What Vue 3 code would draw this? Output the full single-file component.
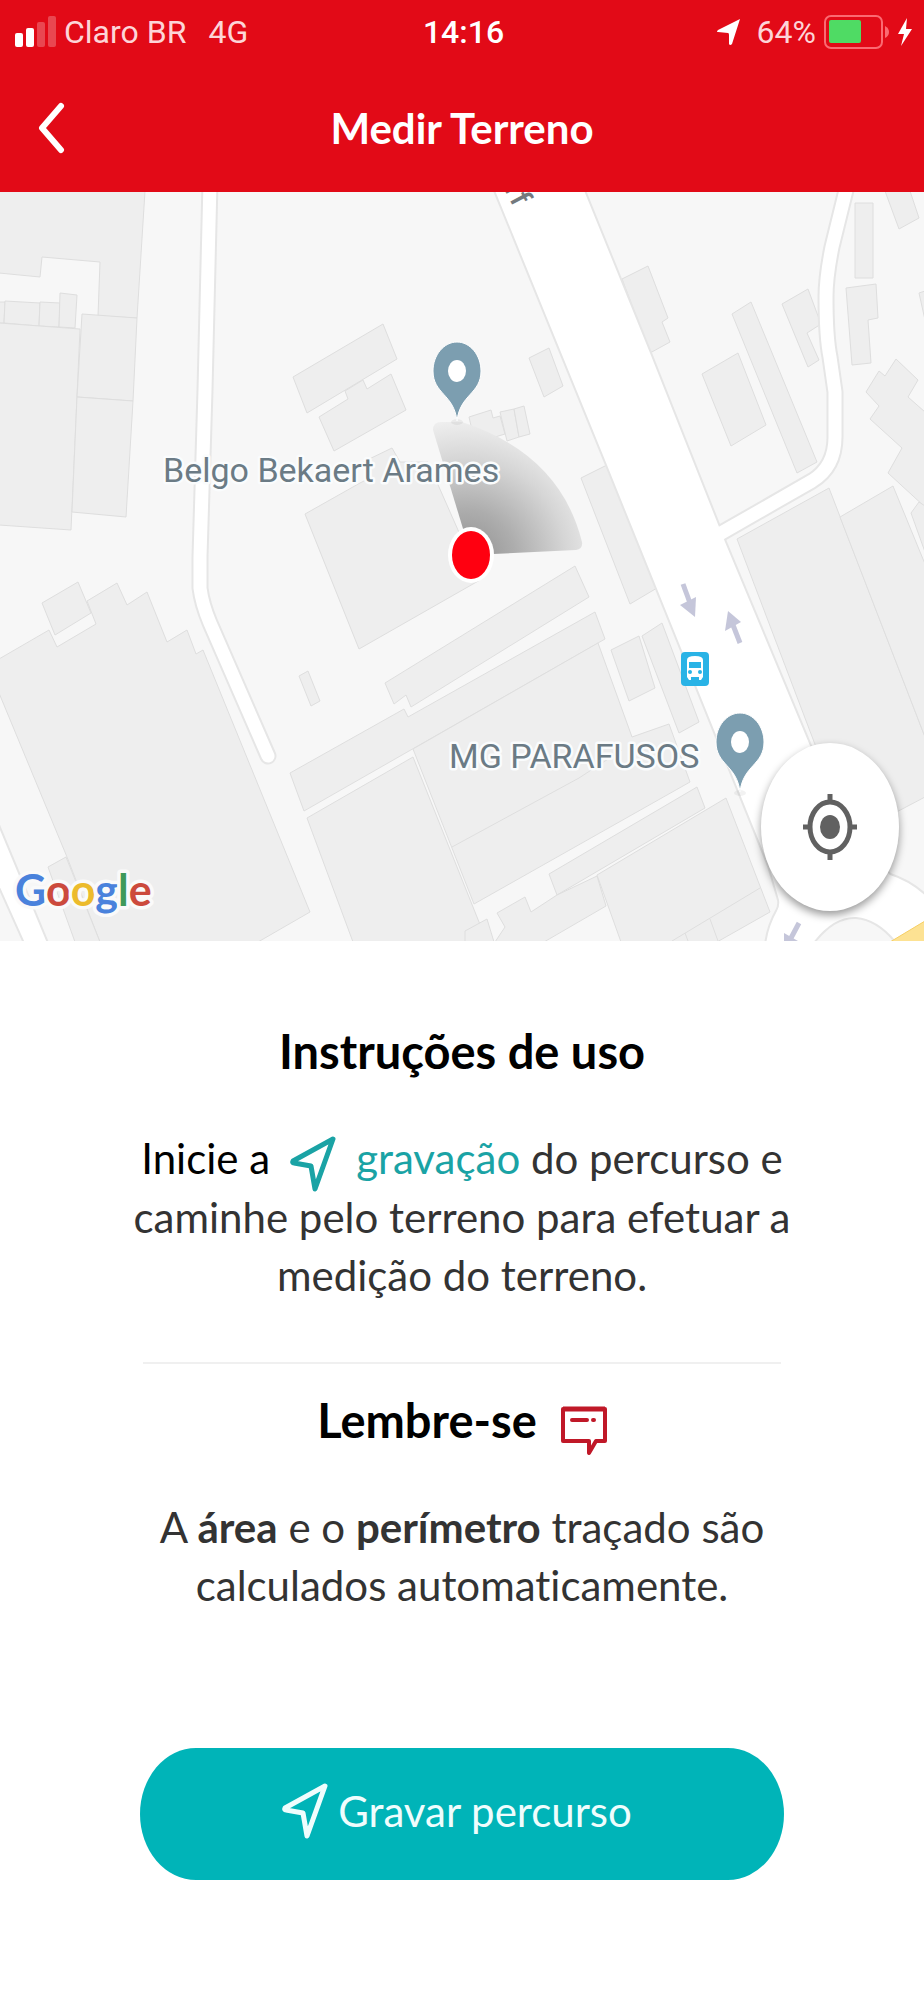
<template>
  <div class="screen">
    <header class="header">
      <div class="status-bar">
        <div class="status-left">
          <svg class="signal" viewBox="0 0 41 32" fill="#fff">
            <rect x="0" y="17" width="8" height="14" rx="2"/>
            <rect x="11" y="12" width="8" height="19" rx="2"/>
            <rect x="22" y="6" width="8" height="25" rx="2" opacity="0.25"/>
            <rect x="33" y="0" width="8" height="31" rx="2" opacity="0.25"/>
          </svg>
          <span>Claro BR</span>
          <span class="network">4G</span>
        </div>
        <span class="clock">14:16</span>
        <div class="status-right">
          <svg class="location" viewBox="0 0 24 28" fill="#fff">
            <path d="M23 1 L1 12 Q-1 14 1 14 L11 15 Q12 15 12 17 L12 26 Q13 28 15 26 Z"/>
          </svg>
          <span>64%</span>
          <svg class="battery" viewBox="0 0 66 34">
            <rect x="1" y="1" width="57" height="32" rx="6" fill="none" stroke="#fb6a72" stroke-width="2"/>
            <rect x="5" y="5" width="32" height="23" rx="2" fill="#4fdb64"/>
            <path d="M61 11 Q65 13 65 17 Q65 21 61 23 Z" fill="#fb6a72"/>
          </svg>
          <svg class="bolt" viewBox="0 0 14 28" fill="#fff">
            <path d="M9 0 L0 16 L6 16 L3 28 L14 11 L8 11 Z"/>
          </svg>
        </div>
      </div>
      <div class="nav-bar">
        <button class="btn-back" aria-label="Voltar">
          <svg viewBox="0 0 28 52" fill="none" stroke="#fff" stroke-width="6" stroke-linecap="round" stroke-linejoin="round">
            <path d="M23 4 L4 26 L23 48"/>
          </svg>
        </button>
        <h1 class="title">Medir Terreno</h1>
      </div>
    </header>

    <div class="map">
      <svg class="map-canvas" viewBox="0 0 924 749">
        <defs>
          <radialGradient id="cone" gradientUnits="userSpaceOnUse" cx="465" cy="368" r="145">
            <stop offset="0" stop-color="#8e8e8e"/>
            <stop offset="0.35" stop-color="#adadad"/>
            <stop offset="0.7" stop-color="#d6d6d6"/>
            <stop offset="1" stop-color="#f2f2f2"/>
          </radialGradient>
        </defs>
        <rect width="924" height="749" fill="#f7f7f7"/>

        <!-- Prédios -->
        <g fill="#eeeeee" stroke="#dedede" stroke-width="1">
          <polygon v-for="(points, i) in buildings" :key="i" :points="points"/>
        </g>
        <g fill="none" stroke="#dedede" stroke-width="1">
          <path d="M452 655 L579 586 L622 558"/>
          <path d="M760 696 L672 749 M710 727 L718 749 M685 741 L688 749"/>
        </g>

        <!-- Ruas : bordas primeiro, depois o preenchimento -->
        <g fill="none" stroke="#e6e6e6" stroke-linejoin="round">
          <path d="M-5 626 L47 751 L25 751 L-5 684 Z" stroke-width="4"/>
          <path :d="mainRoad" stroke-width="4"/>
          <path :d="westRoad" stroke-width="17" stroke-linecap="round"/>
          <path :d="eastRoad" stroke-width="17"/>
        </g>
        <path d="M-5 626 L47 751 L25 751 L-5 684 Z" fill="#fff"/>
        <path :d="mainRoad" fill="#fff"/>
        <g fill="none" stroke="#fff" stroke-width="13" stroke-linecap="round" stroke-linejoin="round">
          <path :d="westRoad"/>
          <path :d="eastRoad"/>
        </g>
        <path d="M814 751 Q834 725 856 726 Q878 728 896 751 Z" fill="#f7f7f7" stroke="#e6e6e6" stroke-width="2"/>
        <path d="M890 750 L925 729 L925 750 Z" fill="#fde293" stroke="#f6cf65" stroke-width="1"/>

        <!-- Setas de sentido -->
        <g fill="#c5c6da" stroke="#c5c6da">
          <path d="M683 392 L690 411" stroke-width="5"/>
          <path d="M680 413 L696 405 L695 425 Z" stroke="none"/>
          <path d="M740 451 L733 433" stroke-width="5"/>
          <path d="M728 419 L741 430 L725 439 Z" stroke="none"/>
          <path d="M799 731 L791 746" stroke-width="5"/>
          <path d="M784 741 L798 749 L784 749 Z" stroke="none"/>
        </g>

        <!-- Ponto de ônibus -->
        <g>
          <rect x="681" y="460" width="28" height="34" rx="4" fill="#29b3e6"/>
          <path d="M687 468 Q687 464 695 464 Q703 464 703 468 L703 485 L701 488 L699 488 L699 485 L691 485 L691 488 L689 488 L687 485 Z" fill="#fff"/>
          <rect x="689" y="470" width="12" height="6" fill="#29b3e6"/>
          <circle cx="690" cy="480" r="2" fill="#29b3e6"/>
          <circle cx="700" cy="480" r="2" fill="#29b3e6"/>
        </g>

        <text class="street" transform="translate(514 16) rotate(62)" text-anchor="end">rf</text>

        <path d="M471 363 L433 238 Q433 230 441 230 L462 230 Q560 262 582 350 Q583 357 576 358 Z" fill="url(#cone)"/>

        <text class="place" x="163" y="290">Belgo Bekaert Arames</text>
        <text class="place" x="449" y="576">MG PARAFUSOS</text>

        <g v-for="pin in pins" :key="pin.x" :transform="`translate(${pin.x} ${pin.y})`">
          <ellipse cx="0" cy="1" rx="6" ry="3" fill="#000" opacity="0.05"/>
          <path d="M0 0 C-3 -27 -24 -27 -24 -50 C-24 -66 -13 -79 0 -79 C13 -79 24 -66 24 -50 C24 -27 3 -27 0 0 Z" fill="#7c9eb0" stroke="#fff" stroke-width="1"/>
          <ellipse cx="0" cy="-50" rx="9" ry="11" fill="#fff"/>
        </g>

        <ellipse cx="471" cy="363" rx="23" ry="28" fill="#fff"/>
        <ellipse cx="471" cy="363" rx="19" ry="24" fill="#ff0010"/>

        <text class="google" x="15" y="714">
          <tspan fill="#4a82dc">G</tspan><tspan fill="#cc4a3d">o</tspan><tspan fill="#ecbb2c">o</tspan><tspan fill="#4a82dc">g</tspan><tspan fill="#3f9a5a">l</tspan><tspan fill="#cc4a3d">e</tspan>
        </text>
      </svg>

      <button class="btn-locate" aria-label="Minha localização">
        <svg viewBox="0 0 54 66" fill="none" stroke="#616161">
          <ellipse cx="27" cy="33" rx="20" ry="25" stroke-width="5"/>
          <ellipse cx="27" cy="33" rx="10" ry="12" fill="#616161" stroke="none"/>
          <path d="M27 0 V8 M27 58 V66 M0 33 H8 M46 33 H54" stroke-width="5"/>
        </svg>
      </button>
    </div>

    <main class="content">
      <h2>Instruções de uso</h2>
      <p>
        <span class="start">Inicie a</span>
        <svg class="arrow arrow-inline" viewBox="0 0 46 56"><path :d="arrowPath"/></svg>
        <span class="record">gravação</span> do percurso e<br>
        caminhe pelo terreno para efetuar a<br>
        medição do terreno.
      </p>
      <hr>
      <h2 class="reminder">
        Lembre-se
        <svg viewBox="0 0 46 50" fill="none" stroke="#c01828">
          <path d="M2 3 H44 V35 H35 L28 47 V35 H2 Z" stroke-width="4" stroke-linejoin="round"/>
          <path d="M2 3 H44" stroke-width="5"/>
          <path d="M11 14 H26 M32 14 H33" stroke-width="4" stroke-linecap="round"/>
        </svg>
      </h2>
      <p>
        A <strong>área</strong> e o <strong>perímetro</strong> traçado são<br>
        calculados automaticamente.
      </p>
      <button class="btn-record">
        <svg class="arrow" viewBox="0 0 46 56"><path :d="arrowPath"/></svg>
        <span>Gravar percurso</span>
      </button>
    </main>
  </div>
</template>

<script setup>
const arrowPath = 'M43 3 L3 25 Q2 27 4 27 L21 30 L25 53 Z';

const mainRoad = 'M494 -4 L607 273 L769 674 L779 708 Q780 714 777 719 Q768 735 766 753 L930 753 L930 708 Q912 690 890 683 L846 640 L725 350 L650 161 L583 -4 Z';
const westRoad = 'M210 -10 L205 198 L200 365 L200 396 Q202 412 210 431 L268 564';
const eastRoad = 'M848 -10 L832 55 Q826 85 826 105 Q826 145 830 165 L835 200 L835 245 Q835 275 812 289 L716 344';

const pins = [
  { x: 457, y: 229 },
  { x: 740, y: 600 },
];

const buildings = [
  // noroeste
  '-1,-1 145,-1 137,126 98,124 100,70 42,65 40,85 -1,81',
  '-1,110 5,110 4,131 -1,131',
  '5,109 40,111 39,134 4,131',
  '40,110 60,111 59,135 39,134',
  '60,101 77,103 75,136 59,135',
  '-1,131 80,137 71,338 -1,333',
  '82,122 137,126 133,209 77,205',
  '77,205 133,209 126,325 72,320',
  // centro
  '293,185 383,132 397,167 307,221',
  '319,225 348,207 345,199 363,188 367,197 391,182 406,218 334,259',
  '305,322 360,291 368,287 363,270 392,256 400,270 428,270 480,388 359,457',
  '469,225 491,218 493,226 500,224 505,242 475,251',
  '500,220 514,217 519,245 507,249',
  '514,217 524,214 530,242 519,245',
  '529,166 549,156 563,194 544,205',
  '581,286 607,273 657,396 630,412',
  '611,458 639,444 655,496 629,509',
  '642,444 662,431 699,530 679,541',
  '299,484 308,479 320,509 311,514',
  // nordeste
  '622,87 648,74 668,126 662,130 670,150 650,161',
  '702,182 738,161 766,233 731,254',
  '732,122 751,110 817,270 797,281',
  '782,112 808,97 821,132 807,141 819,168 808,175',
  '855,11 873,11 873,86 855,86',
  '846,96 876,92 878,126 868,128 871,171 852,173',
  '885,-1 910,-1 919,26 899,37',
  '925,99 919,101 925,128',
  '896,167 918,188 908,205 925,220 925,315 888,281 902,256 870,227 879,214 866,200 879,179 885,184',
  '925,314 919,310 911,321 925,360',
  '737,347 829,296 925,545 925,605 870,634 846,634',
  '840,325 893,294 925,372 925,545',
  // sudoeste
  '-1,467 49,438 57,455 96,432 87,409 117,391 127,413 147,400 167,450 187,438 196,462 203,458 310,720 258,750 100,750 67,665 -1,501',
  '42,411 78,390 91,421 55,443',
  '48,675 66,665 100,750 75,750',
  // sul
  '385,491 575,374 589,405 411,515 406,503 394,512',
  '290,581 404,517 408,525 595,420 605,447 304,619',
  '307,626 413,565 487,750 353,750',
  '413,557 598,451 632,545 669,532 690,590 474,712',
  '549,682 697,595 705,616 557,703',
  '597,683 726,606 770,720 717,750 621,750',
  '557,703 597,684 606,714 544,750 495,750 505,735 497,721 525,705 531,720',
  '465,739 487,727 494,750 465,750',
];
</script>

<style>
body {
  background: #fff;
}
</style>

<style scoped>
.screen {
  font-family: Lato, "Open Sans", sans-serif;
  font-variant-ligatures: none;
  background: #fff;
}

button {
  border: none;
  padding: 0;
  font-family: inherit;
  cursor: pointer;
}

.header {
  background: #e20a17;
  color: #fff;
}

.status-bar {
  display: grid;
  grid-template-columns: 1fr auto 1fr;
  align-items: center;
  height: 64px;
  padding: 0 12px 0 15px;
  font-family: Roboto, sans-serif;
  font-size: 32px;
  line-height: 64px;
}

.status-left,
.status-right {
  display: flex;
  align-items: center;
}
.status-left { color: #fdd5d8; }
.status-right {
  justify-content: flex-end;
  color: #fdd5d8;
}

.signal {
  width: 41px;
  height: 32px;
  margin-right: 8px;
}
.network { margin-left: 22px; }
.clock { font-weight: 500; }
.location {
  width: 24px;
  height: 28px;
  margin-right: 16px;
}
.battery {
  width: 66px;
  height: 34px;
  margin-left: 8px;
}
.bolt {
  width: 14px;
  height: 28px;
  margin-left: 8px;
}

.nav-bar {
  display: grid;
  grid-template-columns: 64px 1fr 64px;
  align-items: center;
  height: 128px;
  padding: 0 24px;
}

.btn-back {
  justify-self: start;
  padding: 0 14px;
  background: transparent;
}
.btn-back svg {
  display: block;
  width: 28px;
  height: 52px;
}

.title {
  margin: 0;
  font-size: 42px;
  font-weight: 700;
  text-align: center;
}

.map {
  position: relative;
}
.map-canvas {
  display: block;
  width: 100%;
  height: auto;
}

.place {
  font-family: Roboto, sans-serif;
  font-size: 34px;
  fill: #6b7b85;
  stroke: #fafcfd;
  stroke-width: 5px;
  stroke-linejoin: round;
  paint-order: stroke;
}
.street {
  font-family: Roboto, sans-serif;
  font-size: 30px;
  font-weight: 500;
  fill: #74797d;
}
.google {
  font-family: Lato, sans-serif;
  font-size: 43px;
  font-weight: 700;
  stroke: #fafafa;
  stroke-width: 7px;
  stroke-linejoin: round;
  paint-order: stroke;
}

.btn-locate {
  position: absolute;
  right: 25px;
  bottom: 30px;
  display: flex;
  align-items: center;
  justify-content: center;
  width: 138px;
  height: 168px;
  border-radius: 50%;
  background: #fff;
  box-shadow: 0 4px 8px rgba(0, 0, 0, 0.4);
}
.btn-locate svg {
  width: 54px;
  height: 66px;
}

.content {
  display: flex;
  flex-direction: column;
  align-items: center;
  padding: 80px 140px 120px;
  text-align: center;
}

h2 {
  margin: 0 0 48px;
  font-size: 47px;
  font-weight: 700;
  line-height: 60px;
  color: #000;
}

p {
  margin: 0;
  font-size: 42px;
  line-height: 58px;
  color: #333;
  white-space: nowrap;
}
.start { color: #000; }
.record { color: #1aa3a5; }

hr {
  width: 99%;
  height: 2px;
  margin: 58px 0 26px;
  border: none;
  background: #f0f0f0;
}

.reminder {
  display: flex;
  align-items: flex-end;
  justify-content: center;
  gap: 24px;
}
.reminder svg {
  width: 46px;
  height: 50px;
  margin-bottom: -6px;
}

.arrow {
  width: 46px;
  height: 56px;
  fill: none;
  stroke: currentColor;
  stroke-width: 5;
  stroke-linejoin: round;
}
.arrow-inline {
  margin: -2px 20px -4px;
  color: #1aa3a5;
  vertical-align: middle;
}

.btn-record {
  display: flex;
  align-items: center;
  justify-content: center;
  gap: 10px;
  width: 100%;
  height: 132px;
  margin-top: 134px;
  padding: 0 10px 6px 0;
  border-radius: 56px / 66px;
  background: #00b4b8;
  color: #effdfd;
  font-size: 42px;
}
</style>
